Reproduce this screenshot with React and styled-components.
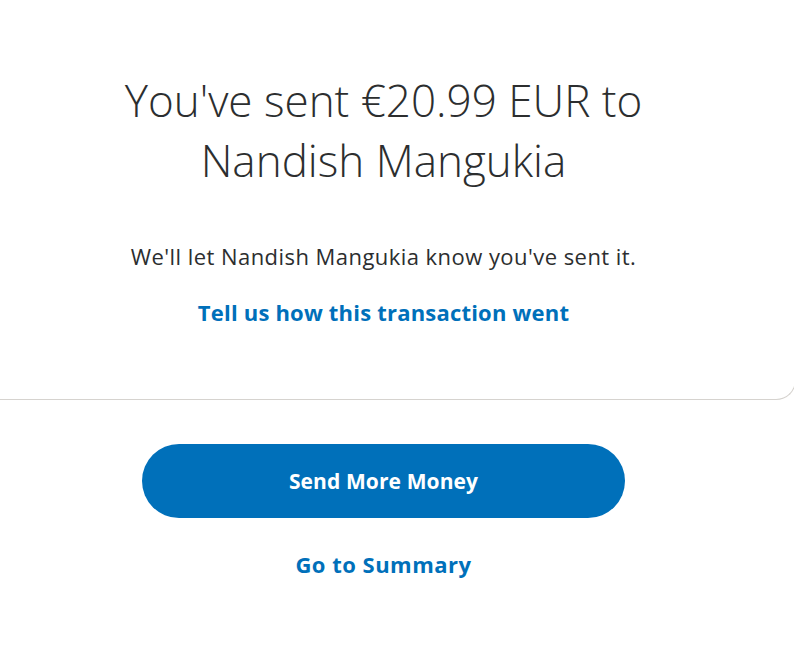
import React from 'react';
import styled, { createGlobalStyle } from 'styled-components';

const GlobalStyle = createGlobalStyle`
  html, body {
    margin: 0;
    padding: 0;
    background: #ffffff;
  }
  body {
    font-family: "Open Sans", "Liberation Sans", Arial, sans-serif;
    color: #2c2e2f;
    overflow: hidden;
  }
`;

const Page = styled.div`
  width: 794px;
  height: 650px;
  overflow: hidden;
`;

const Card = styled.section`
  margin-left: -21px;
  width: 817px;
  box-sizing: border-box;
  background: #ffffff;
  border-bottom: 1px solid #d6d3cf;
  border-right: 1px solid #d6d3cf;
  border-bottom-right-radius: 20px;
  padding: 70px 0 73px 21px;
`;

const Column = styled.div`
  width: 767px;
  display: flex;
  flex-direction: column;
  align-items: center;
  text-align: center;
`;

const Heading = styled.h1`
  margin: 0;
  width: 560px;
  font-size: 44px;
  line-height: 60px;
  font-weight: 300;
  color: #2c2e2f;
`;

const Message = styled.p`
  margin: 52px 0 0;
  font-size: 22px;
  line-height: 28px;
  letter-spacing: 0.45px;
  font-weight: 400;
  color: #2c2e2f;
`;

const TextLink = styled.a`
  display: block;
  margin-top: ${p => p.$gap || 0}px;
  font-size: 22px;
  line-height: 28px;
  letter-spacing: ${p => p.$spacing || 0.2}px;
  font-weight: 700;
  color: #0070ba;
  text-decoration: none;
  cursor: pointer;
`;

const Actions = styled.div`
  width: 767px;
  display: flex;
  flex-direction: column;
  align-items: center;
  padding-top: 44px;
`;

const PrimaryButton = styled.button`
  width: 483px;
  height: 74px;
  border: none;
  border-radius: 37px;
  background: #0070ba;
  color: #ffffff;
  font-family: inherit;
  font-size: 21px;
  letter-spacing: 0.1px;
  font-weight: 700;
  cursor: pointer;
`;

export default function App() {
  return (
    <Page>
      <GlobalStyle />
      <Card>
        <Column>
          <Heading>You've sent €20.99 EUR to Nandish Mangukia</Heading>
          <Message>We'll let Nandish Mangukia know you've sent it.</Message>
          <TextLink $gap={28}>Tell us how this transaction went</TextLink>
        </Column>
      </Card>
      <Actions>
        <PrimaryButton>Send More Money</PrimaryButton>
        <TextLink $gap={32} $spacing={0.5}>Go to Summary</TextLink>
      </Actions>
    </Page>
  );
}
